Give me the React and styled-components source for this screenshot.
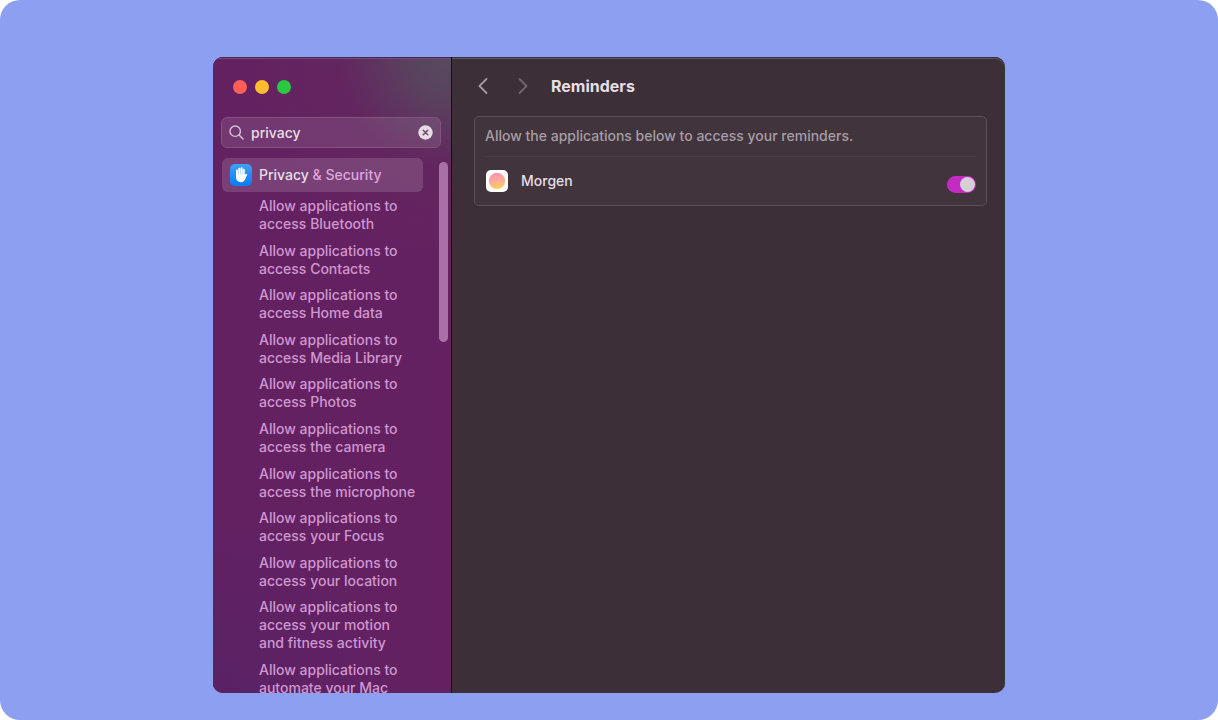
import React, { useState } from 'react';
import styled, { createGlobalStyle, ThemeProvider } from 'styled-components';

const theme = {
    backdrop: '#8d9ff0',
    window: '#3c2f38',
    card: '#41343d',
    cardBorder: '#5c5058',
    sidebar: '#642161',
    sidebarText: '#cf97cf',
    light: '#e6dfe4',
    muted: '#a79da4',
    accent: '#c32cc3',
};

const GlobalStyle = createGlobalStyle`
    * {
        box-sizing: border-box;
    }
    body {
        margin: 0;
        background: #ffffff;
        font-family: Inter, 'Liberation Sans', sans-serif;
        font-size: 14px;
        line-height: 18px;
        font-weight: 500;
    }
    button,
    input {
        font: inherit;
        color: inherit;
        margin: 0;
        padding: 0;
        border: 0;
        background: none;
    }
`;

const Backdrop = styled.div`
    display: flex;
    justify-content: center;
    height: 100vh;
    padding: 57px 24px 27px;
    border-radius: 20px;
    background: ${props => props.theme.backdrop};
`;

const Window = styled.div`
    display: flex;
    width: 100%;
    max-width: 792px;
    border-radius: 10px;
    overflow: hidden;
    background: ${props => props.theme.window};
    box-shadow: inset 0 1px 0 #3a3040, inset 0 2px 0 #5d5260;
`;

const Sidebar = styled.aside`
    display: flex;
    flex-direction: column;
    flex: 0 0 239px;
    min-width: 0;
    border-right: 1px solid #160d15;
    background: radial-gradient(
            circle at 100% 0,
            #564b5f 0,
            rgba(88, 70, 94, 0.9) 40px,
            rgba(98, 42, 94, 0.5) 110px,
            rgba(100, 33, 97, 0) 200px
        ),
        radial-gradient(
            circle at 0 100%,
            #592265 0,
            rgba(100, 33, 97, 0) 200px
        ),
        ${props => props.theme.sidebar};
    box-shadow: inset 0 1px 0 #44284d, inset 0 2px 0 #754b75;
`;

const TrafficLights = styled.div`
    display: flex;
    gap: 8px;
    padding: 23px 20px;
`;

const Light = styled.button`
    width: 14px;
    height: 14px;
    border-radius: 50%;
    background: ${props => props.$color};
`;

const SearchField = styled.label`
    display: flex;
    align-items: center;
    height: 31px;
    margin: 0 10px 0 8px;
    padding: 0 7px;
    border: 1px solid #85527f;
    border-radius: 6px;
    background: rgba(255, 255, 255, 0.1);
    color: ${props => props.theme.light};
`;

const SearchInput = styled.input`
    flex: 1;
    min-width: 0;
    margin-left: 7px;
    outline: none;
`;

const ClearButton = styled.button`
    display: flex;
`;

const SidebarBody = styled.div`
    display: flex;
    flex: 1;
    min-height: 0;
    padding: 10px 3px 0 9px;
`;

const Results = styled.nav`
    display: flex;
    flex: 1;
    flex-direction: column;
    min-width: 0;
`;

const Section = styled.a`
    display: flex;
    align-items: center;
    gap: 7px;
    height: 34px;
    padding: 0 8px;
    border-radius: 6px;
    background: rgba(255, 255, 255, 0.14);
    color: #dda6dc;
    text-decoration: none;
`;

const Match = styled.span`
    color: ${props => props.theme.light};
`;

const HandTile = styled.svg`
    flex: none;
    width: 22px;
    height: 22px;
`;

const ResultList = styled.ul`
    display: flex;
    flex: 1;
    flex-direction: column;
    justify-content: space-between;
    margin: 5px 0 -4px;
    padding: 0 0 0 37px;
    list-style: none;
`;

const ResultLink = styled.a`
    display: block;
    color: ${props => props.theme.sidebarText};
    text-decoration: none;
    white-space: pre-line;
`;

const Scrollbar = styled.div`
    width: 9px;
    height: 180px;
    margin: 4px 0 0 16px;
    border-radius: 5px;
    background: #a970a7;
`;

const Content = styled.main`
    flex: 1;
    min-width: 0;
    padding: 0 18px 0 22px;
`;

const Toolbar = styled.header`
    display: flex;
    align-items: center;
    height: 59px;
    padding-bottom: 1px;
`;

const History = styled.div`
    display: flex;
    gap: 26px;
    margin-right: 23px;
`;

const NavButton = styled.button`
    display: flex;
    color: ${props => (props.disabled ? '#71666d' : '#a39aa0')};
`;

const Title = styled.h1`
    margin: 0;
    font-size: 16px;
    line-height: 20px;
    font-weight: 700;
    color: ${props => props.theme.light};
`;

const Card = styled.section`
    padding: 0 10px;
    border: 1px solid ${props => props.theme.cardBorder};
    border-radius: 5px;
    background: ${props => props.theme.card};
`;

const Hint = styled.p`
    margin: 0;
    padding: 10px 0 11px;
    border-bottom: 1px solid #493c45;
    color: ${props => props.theme.muted};
`;

const AppRow = styled.label`
    display: flex;
    align-items: center;
    height: 48px;
    color: ${props => props.theme.light};
`;

const AppIcon = styled.svg`
    width: 24px;
    height: 24px;
    margin-right: 12px;
`;

const Switch = styled.input`
    appearance: none;
    width: 29px;
    height: 17px;
    margin-top: 6px;
    margin-left: auto;
    padding: 1px;
    border-radius: 9px;
    background: ${props => props.theme.accent};
    &::before {
        content: '';
        display: block;
        width: 15px;
        height: 15px;
        margin-left: auto;
        border-radius: 50%;
        background: #d5d0d4;
    }
    &:not(:checked) {
        background: #62565e;
    }
    &:not(:checked)::before {
        margin-left: 0;
    }
`;

const lights = [
    { label: 'Close', color: '#ff5f57' },
    { label: 'Minimize', color: '#febc2e' },
    { label: 'Zoom', color: '#28c840' },
];

const results = [
    'Allow applications to\naccess Bluetooth',
    'Allow applications to\naccess Contacts',
    'Allow applications to\naccess Home data',
    'Allow applications to\naccess Media Library',
    'Allow applications to\naccess Photos',
    'Allow applications to\naccess the camera',
    'Allow applications to\naccess the microphone',
    'Allow applications to\naccess your Focus',
    'Allow applications to\naccess your location',
    'Allow applications to\naccess your motion\nand fitness activity',
    'Allow applications to\nautomate your Mac',
];

const SearchIcon = () => (
    <svg width="15" height="15" viewBox="0 0 15 15" fill="none" stroke="#d9c5d7" strokeWidth="1.4" strokeLinecap="round">
        <circle cx="6.2" cy="6.2" r="5.2" />
        <path d="M10.1 10.1L14.1 14.1" />
    </svg>
);

const ClearIcon = () => (
    <svg width="15" height="15" viewBox="0 0 15 15">
        <circle cx="7.5" cy="7.5" r="7.2" fill="#e6dce5" />
        <path d="M5.2 5.2L9.8 9.8M9.8 5.2L5.2 9.8" stroke="#704069" strokeWidth="1.4" strokeLinecap="round" />
    </svg>
);

const HandIcon = () => (
    <HandTile viewBox="0 0 22 22" aria-hidden="true">
        <defs>
            <linearGradient id="hand-tile" x1="0" y1="0" x2="0" y2="1">
                <stop offset="0" stopColor="#3fa2fb" />
                <stop offset="1" stopColor="#087bf7" />
            </linearGradient>
        </defs>
        <rect width="22" height="22" rx="5" fill="url(#hand-tile)" />
        <g stroke="#ffffff" strokeWidth="2" strokeLinecap="round" fill="none">
            <path d="M7 6.6V12M9.3 4.8V12M11.6 4.3V12M13.8 5.8V12" />
            <path d="M16.2 10.8L14.2 14" />
        </g>
        <path
            d="M6 10.5H14.8L15.8 13.7C14.8 16.6 13.5 18.2 11 18.2C7.8 18.2 6 16 6 13Z"
            fill="#ffffff"
        />
    </HandTile>
);

const MorgenIcon = () => (
    <AppIcon viewBox="0 0 24 24" aria-hidden="true">
        <defs>
            <linearGradient id="morgen-sun" x1="0.3" y1="0" x2="0.5" y2="1">
                <stop offset="0" stopColor="#fb94b0" />
                <stop offset="0.5" stopColor="#fda99c" />
                <stop offset="1" stopColor="#ffd35a" />
            </linearGradient>
        </defs>
        <rect x="1" y="1" width="22" height="22" rx="5" fill="#ffffff" />
        <circle cx="12" cy="12" r="8.2" fill="url(#morgen-sun)" />
    </AppIcon>
);

const Chevron = ({ d }) => (
    <svg width="14" height="18" viewBox="0 0 14 18" fill="none" stroke="currentColor" strokeWidth="1.8" strokeLinecap="round" strokeLinejoin="round">
        <path d={d} />
    </svg>
);

const App = () => {
    const [query, setQuery] = useState('privacy');
    const [allowed, setAllowed] = useState(true);

    return (
        <ThemeProvider theme={theme}>
            <GlobalStyle />
            <Backdrop>
                <Window>
                    <Sidebar>
                        <TrafficLights>
                            {lights.map(({ label, color }) => (
                                <Light key={label} aria-label={label} $color={color} />
                            ))}
                        </TrafficLights>
                        <SearchField>
                            <SearchIcon />
                            <SearchInput
                                type="text"
                                aria-label="Search"
                                value={query}
                                onChange={e => setQuery(e.target.value)}
                            />
                            <ClearButton aria-label="Clear" onClick={() => setQuery('')}>
                                <ClearIcon />
                            </ClearButton>
                        </SearchField>
                        <SidebarBody>
                            <Results>
                                <Section href="#privacy">
                                    <HandIcon />
                                    <span>
                                        <Match>Privacy</Match> &amp; Security
                                    </span>
                                </Section>
                                <ResultList>
                                    {results.map(result => (
                                        <li key={result}>
                                            <ResultLink href="#privacy">{result}</ResultLink>
                                        </li>
                                    ))}
                                </ResultList>
                            </Results>
                            <Scrollbar />
                        </SidebarBody>
                    </Sidebar>
                    <Content>
                        <Toolbar>
                            <History>
                                <NavButton aria-label="Back">
                                    <Chevron d="M12.5 2L5.5 9L12.5 16" />
                                </NavButton>
                                <NavButton aria-label="Forward" disabled>
                                    <Chevron d="M5.5 2L12.5 9L5.5 16" />
                                </NavButton>
                            </History>
                            <Title>Reminders</Title>
                        </Toolbar>
                        <Card>
                            <Hint>Allow the applications below to access your reminders.</Hint>
                            <AppRow>
                                <MorgenIcon />
                                Morgen
                                <Switch
                                    type="checkbox"
                                    role="switch"
                                    checked={allowed}
                                    onChange={e => setAllowed(e.target.checked)}
                                />
                            </AppRow>
                        </Card>
                    </Content>
                </Window>
            </Backdrop>
        </ThemeProvider>
    );
};

export default App;
